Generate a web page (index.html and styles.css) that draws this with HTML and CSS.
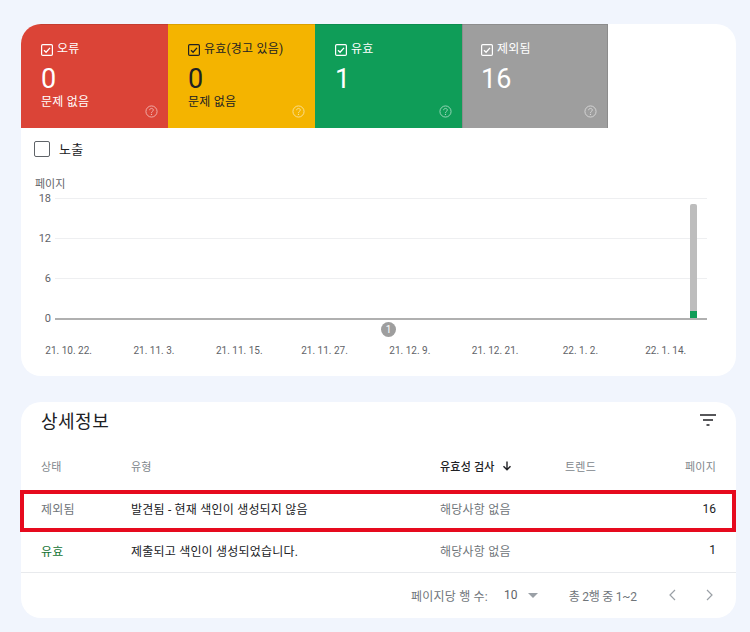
FILE: index.html
```html
<!DOCTYPE html>
<html lang="ko">
<head>
<meta charset="utf-8">
<title>색인 생성 범위</title>
<link rel="stylesheet" href="styles.css">
</head>
<body>
<svg class="defs" width="0" height="0" aria-hidden="true">
  <symbol id="check" viewBox="0 0 12 12">
    <rect x="0.6" y="0.6" width="10.8" height="10.8" rx="1.2" fill="none" stroke="currentColor" stroke-width="1.2"/>
    <path d="M3 6.2 5.1 8.2 9 3.9" fill="none" stroke="currentColor" stroke-width="1.3"/>
  </symbol>
  <symbol id="help" viewBox="0 0 14 14">
    <circle cx="7" cy="7" r="6" fill="none" stroke="currentColor" stroke-width="1"/>
    <path d="M5 5.6C5 4.4 5.9 3.7 7 3.7S9 4.4 9 5.4C9 6.8 7 6.9 7 8.5" fill="none" stroke="currentColor" stroke-width="1"/>
    <circle cx="7" cy="10.2" r=".7" fill="currentColor"/>
  </symbol>
</svg>
<main class="page">
  <section class="card overview">
    <div class="tiles">
      <div class="tile tile-red">
        <div class="tile-head"><svg class="check"><use href="#check"/></svg><span>오류</span></div>
        <div class="tile-num">0</div>
        <div class="tile-sub">문제 없음</div>
        <svg class="help"><use href="#help"/></svg>
      </div>
      <div class="tile tile-yellow">
        <div class="tile-head"><svg class="check"><use href="#check"/></svg><span>유효(경고 있음)</span></div>
        <div class="tile-num">0</div>
        <div class="tile-sub">문제 없음</div>
        <svg class="help"><use href="#help"/></svg>
      </div>
      <div class="tile tile-green">
        <div class="tile-head"><svg class="check"><use href="#check"/></svg><span>유효</span></div>
        <div class="tile-num">1</div>
        <svg class="help"><use href="#help"/></svg>
      </div>
      <div class="tile tile-grey">
        <div class="tile-head"><svg class="check"><use href="#check"/></svg><span>제외됨</span></div>
        <div class="tile-num">16</div>
        <svg class="help"><use href="#help"/></svg>
      </div>
    </div>
    <label class="toggle"><span class="box"></span><span class="toggle-text">노출</span></label>
    <div class="chart">
      <div class="chart-title">페이지</div>
      <div class="plot">
        <div class="tick"><span class="tick-label">18</span><span class="tick-line"></span></div>
        <div class="tick"><span class="tick-label">12</span><span class="tick-line"></span></div>
        <div class="tick"><span class="tick-label">6</span><span class="tick-line"></span></div>
        <div class="tick tick-zero"><span class="tick-label">0</span><span class="tick-line"></span></div>
        <div class="bar"><span class="bar-grey"></span><span class="bar-green"></span></div>
        <div class="marker">1</div>
      </div>
      <div class="dates">
        <span>21. 10. 22.</span><span>21. 11. 3.</span><span>21. 11. 15.</span><span>21. 11. 27.</span>
        <span>21. 12. 9.</span><span>21. 12. 21.</span><span>22. 1. 2.</span><span>22. 1. 14.</span>
      </div>
    </div>
  </section>

  <section class="card details">
    <header class="details-head">
      <h2>상세정보</h2>
      <svg class="filter" viewBox="0 0 16 12"><path d="M0 1h16M3 6h10M6.5 11h3" stroke="#202124" stroke-width="1.4" fill="none"/></svg>
    </header>
    <div class="row row-head">
      <span>상태</span><span>유형</span>
      <span class="sorted">유효성 검사
        <svg class="arrow" viewBox="0 0 10 10"><path d="M5 .5v8M1.5 5.2 5 8.8l3.5-3.6" fill="none" stroke="#202124" stroke-width="1.4"/></svg>
      </span>
      <span class="trend">트렌드</span><span class="num">페이지</span>
    </div>
    <div class="row row-a">
      <span class="muted">제외됨</span><span class="name">발견됨 - 현재 색인이 생성되지 않음</span>
      <span class="muted">해당사항 없음</span><span></span><span class="num value">16</span>
      <span class="highlight"></span>
    </div>
    <div class="row row-b">
      <span class="valid">유효</span><span class="name">제출되고 색인이 생성되었습니다.</span>
      <span class="muted">해당사항 없음</span><span></span><span class="num value">1</span>
    </div>
    <footer class="pager">
      <span class="pager-label">페이지당 행 수:</span>
      <span class="pager-size">10</span>
      <span class="caret"></span>
      <span class="pager-range">총 2행 중 1~2</span>
      <svg class="chev" viewBox="0 0 10 12"><path d="M7 1 2 6l5 5" fill="none" stroke="#9aa0a6" stroke-width="1.2"/></svg>
      <svg class="chev" viewBox="0 0 10 12"><path d="M3 1l5 5-5 5" fill="none" stroke="#9aa0a6" stroke-width="1.2"/></svg>
    </footer>
  </section>
</main>
</body>
</html>
```
FILE: styles.css
```css
* { box-sizing: border-box; }
html, body { margin: 0; height: 632px; overflow: hidden; }
body {
  background: #f1f5fd;
  font-family: Roboto, "Noto Sans CJK KR", "Liberation Sans", sans-serif;
  font-size: 12px;
  letter-spacing: .2px;
  color: #3c4043;
}
.defs { position: absolute; }
.page {
  width: 736px;
  padding: 24px 0 0 21px;
  display: flex;
  flex-direction: column;
  gap: 26px;
}
.card { background: #fff; border-radius: 20px; width: 715px; }

/* overview */
.overview { height: 352px; overflow: hidden; }
.tiles { display: flex; height: 104px; }
.tile {
  position: relative;
  width: 147px;
  height: 104px;
  padding: 18px 0 0 20px;
  color: #fff;
  box-shadow: inset 0 1px 0 rgba(0, 0, 0, .1);
}
.tile-red { background: #db4437; }
.tile-yellow { background: #f4b400; color: #202124; }
.tile-green { background: #0f9d58; }
.tile-grey {
  background: #9e9e9e;
  border-right: 1px solid #8c8c8c;
  width: 146px;
  padding-left: 19px;
  box-shadow: inset 0 1px 0 rgba(0, 0, 0, .1), inset 1px 0 0 rgba(0, 0, 0, .1);
}
.tile-head { display: flex; align-items: center; gap: 4px; height: 14px; font-size: 12px; line-height: 14px; }
.check { width: 12px; height: 12px; flex: none; margin-top: 2px; }
.tile-num { font-size: 27px; line-height: 32px; margin-top: 7px; font-weight: 400; letter-spacing: 0; }
.tile-sub { font-size: 12px; line-height: 14px; margin-top: 0; }
.help {
  position: absolute;
  right: 10.5px;
  bottom: 10px;
  width: 13px;
  height: 13px;
  color: #fff;
  opacity: .6;
}
.toggle { display: flex; align-items: center; gap: 9px; padding: 13px 0 0 13px; height: 29px; font-size: 13px; color: #202124; }
.toggle-text { margin-top: -2px; }
.box { width: 16px; height: 16px; border: 1.5px solid #5f6368; border-radius: 2px; }
.chart { padding-top: 21px; }
.chart-title { font-size: 11px; line-height: 14px; padding-left: 14px; color: #5f6368; letter-spacing: 0; }
.plot { position: relative; height: 120px; margin-top: 6px; }
.tick { display: flex; align-items: center; height: 1px; margin-bottom: 39px; }
.tick-label { width: 30px; text-align: right; font-size: 11px; line-height: 1; color: #5f6368; flex: none; letter-spacing: 0; }
.tick-line { width: 652px; height: 1px; margin-left: 4px; background: #eeeff1; flex: none; }
.tick-zero { margin-bottom: 0; }
.tick-zero .tick-line { height: 2px; background: #b0b0b0; }
.bar { position: absolute; left: 669px; top: 6px; width: 7px; height: 114px; display: flex; flex-direction: column; }
.bar-grey { flex: 1; background: #bdbdbd; border-radius: 2px 2px 0 0; }
.bar-green { height: 7px; background: #0f9d58; }
.marker {
  position: absolute;
  left: 360px;
  top: 124px;
  width: 15px;
  height: 15px;
  border-radius: 50%;
  background: #9e9e9e;
  color: #fff;
  font-size: 10px;
  line-height: 15px;
  text-align: center;
  letter-spacing: 0;
}
.dates {
  display: grid;
  grid-template-columns: repeat(8, 85.3px);
  padding: 26px 0 0 5px;
  font-size: 10px;
  line-height: 14px;
  letter-spacing: 0;
  color: #5f6368;
  text-align: center;
}

/* details */
.details { height: 216px; }
.details-head { display: flex; justify-content: space-between; align-items: center; height: 40px; padding: 0 20px; }
.details-head h2 { margin: 0; font-size: 18px; font-weight: 400; color: #202124; line-height: 38px; letter-spacing: .5px; }
.filter { width: 16px; height: 12px; margin-top: -4px; }
.row {
  position: relative;
  display: grid;
  grid-template-columns: 90px 309px 124px 1fr 40px;
  align-items: center;
  padding: 0 20px;
}
.row-head { height: 48px; color: #80868b; font-size: 11px; }
.row-a { height: 42px; padding-bottom: 5px; }
.row-b { height: 41px; padding-bottom: 4px; border-bottom: 1px solid #e8eaed; }
.sorted { color: #202124; font-weight: 500; display: flex; align-items: center; gap: 7px; }
.trend { padding-left: 1px; }
.arrow { width: 10px; height: 10px; }
.num { text-align: right; }
.value { color: #202124; letter-spacing: 0; }
.muted { color: #70757a; }
.name { color: #202124; }
.valid { color: #137333; }
.highlight {
  position: absolute;
  left: -1px;
  right: 0;
  top: 0;
  bottom: 0;
  border: 4px solid #e60a1e;
  pointer-events: none;
}
.pager { display: flex; align-items: center; height: 44px; padding-left: 390px; color: #70757a; font-size: 12px; }
.pager-size { margin-left: 16px; color: #5f6368; }
.caret { width: 0; height: 0; margin-left: 10px; border: 5px solid transparent; border-top: 5px solid #9aa0a6; border-bottom: 0; }
.pager-range { margin-left: 31px; letter-spacing: -.25px; }
.chev { width: 10px; height: 12px; margin-left: 31px; }
.chev + .chev { margin-left: 26px; }
```
